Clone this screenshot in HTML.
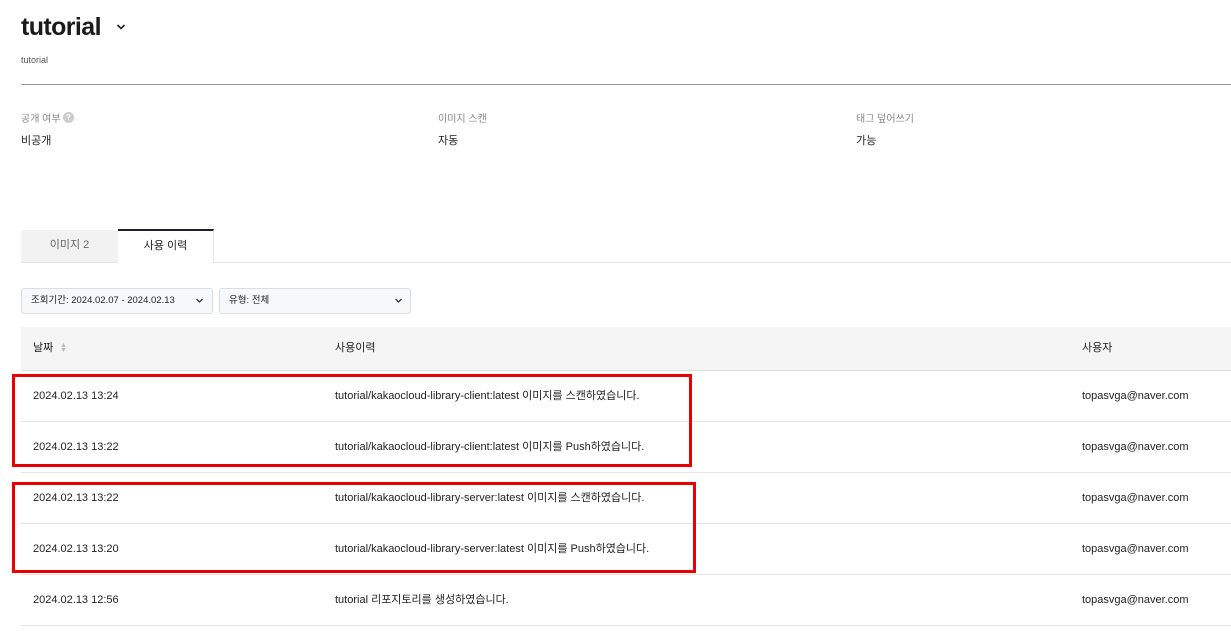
<!DOCTYPE html>
<html><head><meta charset="utf-8"><style>
*{margin:0;padding:0;box-sizing:border-box}
body{width:1231px;height:644px;background:#fff;font-family:"Liberation Sans","Noto Sans CJK KR",sans-serif;color:#222;position:relative;overflow:hidden}
.a{position:absolute;white-space:nowrap}
.row{position:absolute;left:21px;right:0;height:51px;border-bottom:1px solid #e4e4e4;font-size:11px}
.row span{position:absolute;top:0;line-height:50px}
.red{position:absolute;border:3px solid #e60000}
</style></head><body>
<div class="a" style="left:21px;top:13px;font-size:25px;font-weight:bold;color:#1a1a1a;letter-spacing:-0.6px">tutorial</div>
<svg class="a" style="left:116px;top:23px" width="10" height="8"><path d="M1.5 2 L5 5.5 L8.5 2" stroke="#222" stroke-width="1.6" fill="none"/></svg>
<div class="a" style="left:21px;top:55px;font-size:9px;color:#555">tutorial</div>
<div class="a" style="left:21px;top:84px;width:1210px;height:1px;background:#999"></div>
<div class="a" style="left:21px;top:110px;font-size:10px;color:#888">공개 여부</div>
<div class="a" style="left:63px;top:112px;width:11px;height:11px;border-radius:50%;background:#ccc;color:#fff;font-size:8px;text-align:center;line-height:11px;font-weight:bold">?</div>
<div class="a" style="left:21px;top:132px;font-size:11px">비공개</div>
<div class="a" style="left:438px;top:110px;font-size:10px;color:#888">이미지 스캔</div>
<div class="a" style="left:438px;top:132px;font-size:11px">자동</div>
<div class="a" style="left:856px;top:110px;font-size:10px;color:#888">태그 덮어쓰기</div>
<div class="a" style="left:856px;top:132px;font-size:11px">가능</div>
<div class="a" style="left:21px;top:262px;width:1210px;height:1px;background:#e4e4e4"></div>
<div class="a" style="left:21px;top:230px;width:97px;height:32px;background:#f2f2f2;font-size:11px;color:#666;text-align:center;line-height:31px">이미지 2</div>
<div class="a" style="left:118px;top:229px;width:96px;height:34px;background:#fff;border-top:2px solid #1e1e2e;border-right:1px solid #e4e4e4;font-size:11px;color:#222;text-align:center;line-height:30px">사용 이력</div>
<div class="a" style="left:21px;top:288px;width:192px;height:26px;border:1px solid #ddd;border-radius:3px;background:#f7f8fa;font-size:9.5px;line-height:24px;padding-left:9px">조회기간: 2024.02.07 - 2024.02.13</div>
<svg class="a" style="left:195px;top:297px" width="9" height="7"><path d="M1.5 2 L4.5 5 L7.5 2" stroke="#333" stroke-width="1.3" fill="none"/></svg>
<div class="a" style="left:219px;top:288px;width:192px;height:26px;border:1px solid #ddd;border-radius:3px;background:#f7f8fa;font-size:9.5px;line-height:24px;padding-left:9px">유형: 전체</div>
<svg class="a" style="left:394px;top:297px" width="9" height="7"><path d="M1.5 2 L4.5 5 L7.5 2" stroke="#333" stroke-width="1.3" fill="none"/></svg>
<div class="a" style="left:21px;top:327px;width:1210px;height:44px;background:#f5f5f5;border-bottom:1px solid #ddd;font-size:11px">
<span class="a" style="left:12px;top:0;line-height:42px">날짜</span>
<span class="a" style="left:39px;top:16px;font-size:7px;color:#bbb;line-height:5px">▲<br>▼</span>
<span class="a" style="left:314px;top:0;line-height:42px">사용이력</span>
<span class="a" style="left:1061px;top:0;line-height:42px">사용자</span>
</div>
<div class="row" style="top:371px"><span style="left:12px">2024.02.13 13:24</span><span style="left:314px">tutorial/kakaocloud-library-client:latest 이미지를 스캔하였습니다.</span><span style="left:1061px">topasvga@naver.com</span></div>
<div class="row" style="top:422px"><span style="left:12px">2024.02.13 13:22</span><span style="left:314px">tutorial/kakaocloud-library-client:latest 이미지를 Push하였습니다.</span><span style="left:1061px">topasvga@naver.com</span></div>
<div class="row" style="top:473px"><span style="left:12px">2024.02.13 13:22</span><span style="left:314px">tutorial/kakaocloud-library-server:latest 이미지를 스캔하였습니다.</span><span style="left:1061px">topasvga@naver.com</span></div>
<div class="row" style="top:524px"><span style="left:12px">2024.02.13 13:20</span><span style="left:314px">tutorial/kakaocloud-library-server:latest 이미지를 Push하였습니다.</span><span style="left:1061px">topasvga@naver.com</span></div>
<div class="row" style="top:575px"><span style="left:12px">2024.02.13 12:56</span><span style="left:314px">tutorial 리포지토리를 생성하였습니다.</span><span style="left:1061px">topasvga@naver.com</span></div>
<div class="red" style="left:12px;top:374px;width:680px;height:93px"></div>
<div class="red" style="left:12px;top:482px;width:684px;height:91px"></div>
</body></html>
